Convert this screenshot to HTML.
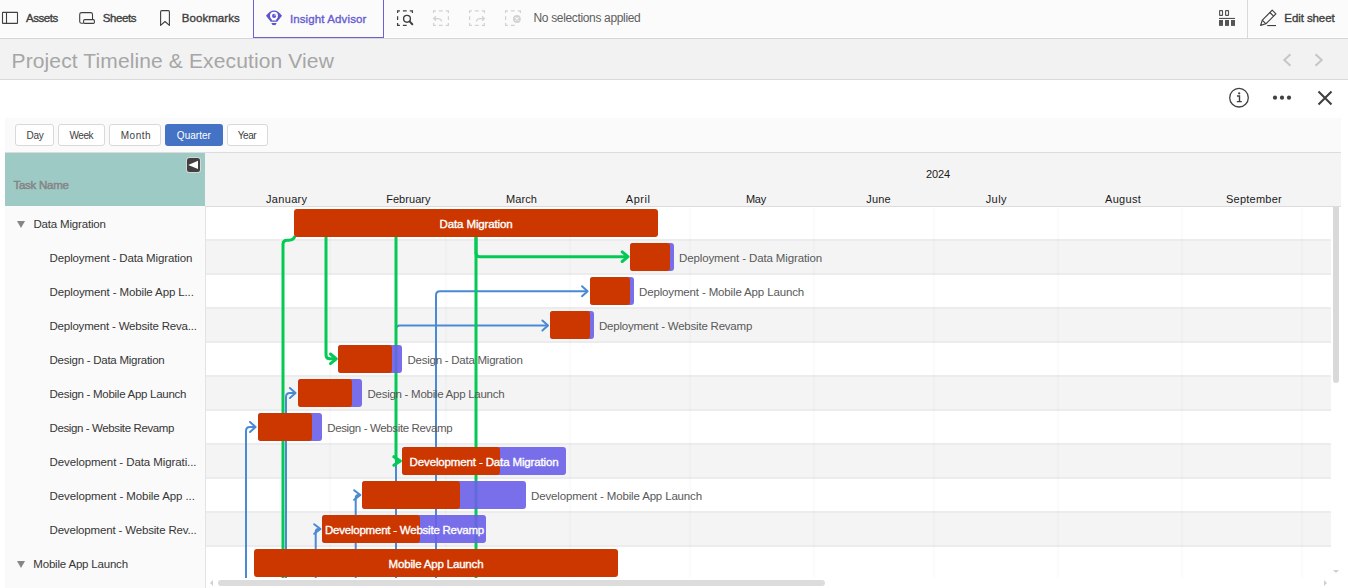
<!DOCTYPE html>
<html><head><meta charset="utf-8"><style>
html,body{margin:0;padding:0;width:1348px;height:588px;overflow:hidden;background:#fff;font-family:"Liberation Sans", sans-serif;}
</style></head><body>
<div style="position:absolute;left:0px;top:0px;width:1348px;height:38px;background:#fbfbfb;"></div><div style="position:absolute;left:0px;top:37px;width:1348px;height:1px;background:#ffffff;"></div><div style="position:absolute;left:0px;top:38px;width:1348px;height:1px;background:#d5d5d5;"></div>
<svg style="position:absolute;left:0;top:0" width="1348" height="38" viewBox="0 0 1348 38">
 <g fill="none" stroke="#404040" stroke-width="1.1">
  <rect x="2.5" y="12.4" width="15" height="11" rx="0.4"/>
  <line x1="6.5" y1="12.4" x2="6.5" y2="23.4"/>
  <path d="M83.6,23.3 H81.6 Q79.7,23.3 79.7,21.4 V14.5 Q79.7,12.6 81.6,12.6 H90.6 Q92.5,12.6 92.5,14.5 V19.6"/>
  <rect x="83.6" y="19.6" width="10.8" height="3.8" rx="1.1"/>
  <path d="M160.6,25.4 V11.8 Q160.6,10.6 161.8,10.6 H168.2 Q169.4,10.6 169.4,11.8 V25.4 L165,21.5 Z" stroke-linejoin="round"/>
 </g>
 <g fill="#5d52cf">
  <path d="M266,15.8 Q270,10.4 274,10.4 Q278,10.4 282,15.8 Q279.5,19 277.2,21.8 H270.8 Q268.5,19 266,15.8 Z"/>
  <path d="M271.8,20.6 V19.5 Q270,18.2 270,15.8 A4,4 0 1 1 278,15.8 Q278,18.2 276.2,19.5 V20.6 Z" fill="#fbfbfb"/>
  <circle cx="274.1" cy="15.9" r="2.05"/>
  <circle cx="275" cy="15" r="0.7" fill="#fbfbfb"/>
  <path d="M271.4,22.9 H276.6 Q276.3,25.3 274,25.3 Q271.7,25.3 271.4,22.9 Z"/>
 </g>
</svg><div style="position:absolute;left:253px;top:-2px;width:131px;height:40px;background:transparent;border:1.5px solid #6b61d6;box-sizing:border-box;"></div><div style="position:absolute;left:26.00px;top:11.42px;font-size:11.5px;line-height:14px;font-weight:400;color:#404040;letter-spacing:-0.432px;white-space:nowrap;-webkit-text-stroke:0.35px #404040;">Assets</div><div style="position:absolute;left:102.70px;top:11.42px;font-size:11.5px;line-height:14px;font-weight:400;color:#404040;letter-spacing:-0.391px;white-space:nowrap;-webkit-text-stroke:0.35px #404040;">Sheets</div><div style="position:absolute;left:181.70px;top:11.42px;font-size:11.5px;line-height:14px;font-weight:400;color:#404040;letter-spacing:0.079px;white-space:nowrap;-webkit-text-stroke:0.35px #404040;">Bookmarks</div><div style="position:absolute;left:289.90px;top:11.72px;font-size:11.5px;line-height:14px;font-weight:400;color:#675cd3;letter-spacing:0.122px;white-space:nowrap;-webkit-text-stroke:0.35px #675cd3;">Insight Advisor</div><svg style="position:absolute;left:390px;top:0" width="140" height="38" viewBox="390 0 140 38"><path d="M397.6,13.1 V10.799999999999999 H399.9 M402.9,10.799999999999999 H406.7 M409.8,10.799999999999999 H412.4 V13.1 M406.7,25.4 H402.9 M399.9,25.4 H397.6 V23.1 M397.6,19.9 V16.2" fill="none" stroke="#404040" stroke-width="1.25"/><circle cx="407" cy="18.8" r="3.4" fill="none" stroke="#404040" stroke-width="1.4"/><path d="M409.6,21.4 L412.3,24.2" stroke="#404040" stroke-width="2" stroke-linecap="round"/><path d="M433.6,13.1 V10.799999999999999 H435.9 M438.9,10.799999999999999 H442.7 M445.8,10.799999999999999 H448.4 V13.1 M448.4,16.2 V19.9 M448.4,23.1 V25.4 H445.8 M442.7,25.4 H438.9 M435.9,25.4 H433.6 V23.1" fill="none" stroke="#d2d2d2" stroke-width="1.25"/><path d="M441.6,21.6 Q441.6,18.5 437.5,18.5 H433.8 M436,16.2 L433.6,18.5 L436,20.8" fill="none" stroke="#d2d2d2" stroke-width="1.25"/><path d="M469.6,13.1 V10.799999999999999 H471.9 M474.9,10.799999999999999 H478.7 M481.8,10.799999999999999 H484.4 V13.1 M484.4,23.1 V25.4 H481.8 M478.7,25.4 H474.9 M471.9,25.4 H469.6 V23.1 M469.6,19.9 V16.2" fill="none" stroke="#d2d2d2" stroke-width="1.25"/><path d="M476.4,21.6 Q476.4,18.5 480.5,18.5 H484.2 M482,16.2 L484.4,18.5 L482,20.8" fill="none" stroke="#d2d2d2" stroke-width="1.25"/><path d="M505.6,13.1 V10.799999999999999 H507.9 M510.9,10.799999999999999 H514.7 M517.8,10.799999999999999 H520.4 V13.1 M514.7,25.4 H510.9 M507.9,25.4 H505.6 V23.1 M505.6,19.9 V16.2" fill="none" stroke="#d2d2d2" stroke-width="1.25"/><circle cx="516.9" cy="19" r="3.9" fill="#d2d2d2"/><path d="M515.3,17.4 L518.5,20.6 M518.5,17.4 L515.3,20.6" stroke="#fbfbfb" stroke-width="1.1"/></svg><div style="position:absolute;left:533.50px;top:10.64px;font-size:12px;line-height:14px;font-weight:400;color:#5e5e5e;letter-spacing:-0.340px;white-space:nowrap;">No selections applied</div>
<svg style="position:absolute;left:1200px;top:0" width="148" height="38" viewBox="1200 0 148 38">
 <g fill="none" stroke="#505050" stroke-width="1.1">
  <rect x="1219.6" y="10.6" width="2.9" height="4.8" rx="0.4"/>
  <rect x="1225.6" y="10.6" width="2.9" height="4.8" rx="0.4"/>
 </g>
 <rect x="1219" y="17.9" width="16" height="1.1" fill="#505050"/>
 <rect x="1219" y="20" width="4" height="5.9" fill="#555"/>
 <rect x="1225" y="20" width="4" height="5.9" fill="#555"/>
 <rect x="1231" y="20" width="4" height="5.9" fill="#555"/>
 <g fill="none" stroke="#404040" stroke-width="1.15" stroke-linejoin="round">
  <path d="M1260.6,25.4 L1262.3,20.2 L1272.2,10.2 L1275.9,13.9 L1265.9,23.8 Z"/>
  <line x1="1262.3" y1="20.2" x2="1265.9" y2="23.8"/>
  <line x1="1269.9" y1="12.5" x2="1273.6" y2="16.2"/>
 </g>
 <rect x="1267.2" y="25" width="8.8" height="1.1" fill="#404040"/>
</svg><div style="position:absolute;left:1247px;top:0px;width:1px;height:38px;background:#d9d9d9;"></div><div style="position:absolute;left:1284.30px;top:11.22px;font-size:11.5px;line-height:14px;font-weight:400;color:#404040;letter-spacing:-0.083px;white-space:nowrap;-webkit-text-stroke:0.35px #404040;">Edit sheet</div><div style="position:absolute;left:0px;top:39px;width:1348px;height:40px;background:#f2f2f2;"></div><div style="position:absolute;left:0px;top:79px;width:1348px;height:1px;background:#d9d9d9;"></div><div style="position:absolute;left:11.50px;top:48.22px;font-size:21px;line-height:25px;font-weight:400;color:#a6a6a6;letter-spacing:0.126px;white-space:nowrap;">Project Timeline &amp; Execution View</div><svg style="position:absolute;left:1270px;top:45px" width="70" height="30" viewBox="1270 45 70 30">
 <g fill="none" stroke="#c6c6c6" stroke-width="2">
  <path d="M1290.5,54.3 L1284.3,60 L1290.5,65.7"/>
  <path d="M1315.5,54.3 L1321.7,60 L1315.5,65.7"/>
 </g></svg><div style="position:absolute;left:0px;top:80px;width:1348px;height:508px;background:#ffffff;"></div><svg style="position:absolute;left:1220px;top:84px" width="128" height="28" viewBox="1220 84 128 28">
 <circle cx="1239" cy="97.7" r="9.3" fill="none" stroke="#404040" stroke-width="1.3"/>
 <circle cx="1239.2" cy="93.3" r="1.15" fill="#404040"/>
 <path d="M1237,96 H1239.5 V101.6 M1236.8,101.6 H1241.8" fill="none" stroke="#404040" stroke-width="1.4"/>
 <g fill="#404040">
  <circle cx="1275" cy="97.7" r="2.1"/>
  <circle cx="1282" cy="97.7" r="2.1"/>
  <circle cx="1289" cy="97.7" r="2.1"/>
 </g>
 <path d="M1318.5,91.5 L1331.5,104.5 M1331.5,91.5 L1318.5,104.5" stroke="#404040" stroke-width="2.1"/>
</svg><div style="position:absolute;left:5px;top:118px;width:1336px;height:470px;background:#fafafa;"></div><div style="position:absolute;left:15px;top:124px;width:39px;height:22px;background:#ffffff;border:1px solid #d9d9d9;border-radius:3px;box-sizing:border-box;"></div><div style="position:absolute;left:58px;top:124px;width:47px;height:22px;background:#ffffff;border:1px solid #d9d9d9;border-radius:3px;box-sizing:border-box;"></div><div style="position:absolute;left:109px;top:124px;width:52px;height:22px;background:#ffffff;border:1px solid #d9d9d9;border-radius:3px;box-sizing:border-box;"></div><div style="position:absolute;left:165px;top:124px;width:58px;height:22px;background:#4472c4;border-radius:3px;"></div><div style="position:absolute;left:227px;top:124px;width:41px;height:22px;background:#ffffff;border:1px solid #d9d9d9;border-radius:3px;box-sizing:border-box;"></div><div style="position:absolute;left:26.60px;top:129.53px;font-size:10px;line-height:12px;font-weight:400;color:#404040;letter-spacing:-0.342px;white-space:nowrap;">Day</div><div style="position:absolute;left:69.60px;top:129.53px;font-size:10px;line-height:12px;font-weight:400;color:#404040;letter-spacing:-0.494px;white-space:nowrap;">Week</div><div style="position:absolute;left:120.70px;top:129.53px;font-size:10px;line-height:12px;font-weight:400;color:#404040;letter-spacing:0.542px;white-space:nowrap;">Month</div><div style="position:absolute;left:176.85px;top:129.53px;font-size:10px;line-height:12px;font-weight:400;color:#ffffff;letter-spacing:0.021px;white-space:nowrap;">Quarter</div><div style="position:absolute;left:237.80px;top:129.53px;font-size:10px;line-height:12px;font-weight:400;color:#404040;letter-spacing:-0.492px;white-space:nowrap;">Year</div><div style="position:absolute;left:5px;top:153px;width:200px;height:53px;background:#9ecac6;"></div><div style="position:absolute;left:186px;top:157px;width:15px;height:15.6px;background:#d6d6d6;border-radius:3.5px;"></div><div style="position:absolute;left:187px;top:158px;width:13px;height:13.6px;background:#404040;border-radius:2.5px;"></div><svg style="position:absolute;left:187px;top:158px" width="14" height="14"><path d="M1.2,6.9 L11,2.8 L11,11 Z" fill="#fff"/></svg><div style="position:absolute;left:13.40px;top:178.02px;font-size:11.5px;line-height:14px;font-weight:400;color:#868686;letter-spacing:-0.253px;white-space:nowrap;-webkit-text-stroke:0.5px #868686;">Task Name</div><div style="position:absolute;left:5px;top:152px;width:1336px;height:1px;background:#dcdcdc;"></div><div style="position:absolute;left:205px;top:153px;width:1136px;height:53px;background:#f4f4f4;"></div><div style="position:absolute;left:205px;top:206px;width:1136px;height:1px;background:#dcdcdc;"></div><div style="position:absolute;left:926.00px;top:167.69px;font-size:11px;line-height:13px;font-weight:400;color:#1a1a1a;letter-spacing:-0.118px;white-space:nowrap;">2024</div><div style="position:absolute;left:266.00px;top:192.69px;font-size:11px;line-height:13px;font-weight:400;color:#1a1a1a;letter-spacing:0.328px;white-space:nowrap;">January</div><div style="position:absolute;left:386.20px;top:192.69px;font-size:11px;line-height:13px;font-weight:400;color:#1a1a1a;letter-spacing:0.041px;white-space:nowrap;">February</div><div style="position:absolute;left:506.00px;top:192.69px;font-size:11px;line-height:13px;font-weight:400;color:#1a1a1a;letter-spacing:0.089px;white-space:nowrap;">March</div><div style="position:absolute;left:625.80px;top:192.69px;font-size:11px;line-height:13px;font-weight:400;color:#1a1a1a;letter-spacing:0.560px;white-space:nowrap;">April</div><div style="position:absolute;left:745.90px;top:192.69px;font-size:11px;line-height:13px;font-weight:400;color:#1a1a1a;letter-spacing:-0.240px;white-space:nowrap;">May</div><div style="position:absolute;left:866.30px;top:192.69px;font-size:11px;line-height:13px;font-weight:400;color:#1a1a1a;letter-spacing:0.188px;white-space:nowrap;">June</div><div style="position:absolute;left:985.70px;top:192.69px;font-size:11px;line-height:13px;font-weight:400;color:#1a1a1a;letter-spacing:0.413px;white-space:nowrap;">July</div><div style="position:absolute;left:1105.00px;top:192.69px;font-size:11px;line-height:13px;font-weight:400;color:#1a1a1a;letter-spacing:0.322px;white-space:nowrap;">August</div><div style="position:absolute;left:1226.00px;top:192.69px;font-size:11px;line-height:13px;font-weight:400;color:#1a1a1a;letter-spacing:0.232px;white-space:nowrap;">September</div><div style="position:absolute;left:5px;top:206px;width:200px;height:382px;background:#fafafa;"></div><div style="position:absolute;left:205px;top:206px;width:1px;height:382px;background:#e3e3e3;"></div><div style="position:absolute;left:33.50px;top:217.02px;font-size:11.5px;line-height:14px;font-weight:400;color:#363636;letter-spacing:-0.184px;white-space:nowrap;">Data Migration</div><svg style="position:absolute;left:16px;top:220px" width="10" height="10"><path d="M1,1 H9 L5,8 Z" fill="#858585"/></svg><div style="position:absolute;left:49.50px;top:251.02px;font-size:11.5px;line-height:14px;font-weight:400;color:#363636;letter-spacing:-0.137px;white-space:nowrap;">Deployment - Data Migration</div><div style="position:absolute;left:49.50px;top:285.02px;font-size:11.5px;line-height:14px;font-weight:400;color:#363636;letter-spacing:-0.122px;white-space:nowrap;">Deployment - Mobile App L...</div><div style="position:absolute;left:49.50px;top:319.02px;font-size:11.5px;line-height:14px;font-weight:400;color:#363636;letter-spacing:-0.187px;white-space:nowrap;">Deployment - Website Reva...</div><div style="position:absolute;left:49.50px;top:353.02px;font-size:11.5px;line-height:14px;font-weight:400;color:#363636;letter-spacing:-0.255px;white-space:nowrap;">Design - Data Migration</div><div style="position:absolute;left:49.50px;top:387.02px;font-size:11.5px;line-height:14px;font-weight:400;color:#363636;letter-spacing:-0.275px;white-space:nowrap;">Design - Mobile App Launch</div><div style="position:absolute;left:49.50px;top:421.02px;font-size:11.5px;line-height:14px;font-weight:400;color:#363636;letter-spacing:-0.385px;white-space:nowrap;">Design - Website Revamp</div><div style="position:absolute;left:49.50px;top:455.02px;font-size:11.5px;line-height:14px;font-weight:400;color:#363636;letter-spacing:-0.091px;white-space:nowrap;">Development - Data Migrati...</div><div style="position:absolute;left:49.50px;top:489.02px;font-size:11.5px;line-height:14px;font-weight:400;color:#363636;letter-spacing:-0.085px;white-space:nowrap;">Development - Mobile App ...</div><div style="position:absolute;left:49.50px;top:523.02px;font-size:11.5px;line-height:14px;font-weight:400;color:#363636;letter-spacing:-0.163px;white-space:nowrap;">Development - Website Rev...</div><div style="position:absolute;left:33.30px;top:557.02px;font-size:11.5px;line-height:14px;font-weight:400;color:#363636;letter-spacing:-0.191px;white-space:nowrap;">Mobile App Launch</div><svg style="position:absolute;left:16px;top:560px" width="10" height="10"><path d="M1,1 H9 L5,8 Z" fill="#858585"/></svg><div style="position:absolute;left:206px;top:207px;width:1135px;height:381px;background:#ffffff;"></div><div style="position:absolute;left:206px;top:206px;width:1125px;height:34px;background:#ffffff;"></div><div style="position:absolute;left:206px;top:240px;width:1125px;height:34px;background:#f4f4f4;"></div><div style="position:absolute;left:206px;top:274px;width:1125px;height:34px;background:#ffffff;"></div><div style="position:absolute;left:206px;top:308px;width:1125px;height:34px;background:#f4f4f4;"></div><div style="position:absolute;left:206px;top:342px;width:1125px;height:34px;background:#ffffff;"></div><div style="position:absolute;left:206px;top:376px;width:1125px;height:34px;background:#f4f4f4;"></div><div style="position:absolute;left:206px;top:410px;width:1125px;height:34px;background:#ffffff;"></div><div style="position:absolute;left:206px;top:444px;width:1125px;height:34px;background:#f4f4f4;"></div><div style="position:absolute;left:206px;top:478px;width:1125px;height:34px;background:#ffffff;"></div><div style="position:absolute;left:206px;top:512px;width:1125px;height:34px;background:#f4f4f4;"></div><div style="position:absolute;left:206px;top:546px;width:1125px;height:32px;background:#ffffff;"></div><div style="position:absolute;left:206px;top:239px;width:1125px;height:2px;background:#ececee;"></div><div style="position:absolute;left:206px;top:273px;width:1125px;height:2px;background:#ececee;"></div><div style="position:absolute;left:206px;top:307px;width:1125px;height:2px;background:#ececee;"></div><div style="position:absolute;left:206px;top:341px;width:1125px;height:2px;background:#ececee;"></div><div style="position:absolute;left:206px;top:375px;width:1125px;height:2px;background:#ececee;"></div><div style="position:absolute;left:206px;top:409px;width:1125px;height:2px;background:#ececee;"></div><div style="position:absolute;left:206px;top:443px;width:1125px;height:2px;background:#ececee;"></div><div style="position:absolute;left:206px;top:477px;width:1125px;height:2px;background:#ececee;"></div><div style="position:absolute;left:206px;top:511px;width:1125px;height:2px;background:#ececee;"></div><div style="position:absolute;left:206px;top:545px;width:1125px;height:2px;background:#ececee;"></div><div style="position:absolute;left:329px;top:207px;width:2px;height:371px;background:rgba(0,0,0,0.016);"></div><div style="position:absolute;left:445px;top:207px;width:2px;height:371px;background:rgba(0,0,0,0.016);"></div><div style="position:absolute;left:569px;top:207px;width:2px;height:371px;background:rgba(0,0,0,0.016);"></div><div style="position:absolute;left:689px;top:207px;width:2px;height:371px;background:rgba(0,0,0,0.016);"></div><div style="position:absolute;left:813px;top:207px;width:2px;height:371px;background:rgba(0,0,0,0.016);"></div><div style="position:absolute;left:933px;top:207px;width:2px;height:371px;background:rgba(0,0,0,0.016);"></div><div style="position:absolute;left:1057px;top:207px;width:2px;height:371px;background:rgba(0,0,0,0.016);"></div><div style="position:absolute;left:1181px;top:207px;width:2px;height:371px;background:rgba(0,0,0,0.016);"></div><div style="position:absolute;left:1301px;top:207px;width:2px;height:371px;background:rgba(0,0,0,0.016);"></div><div style="position:absolute;left:205px;top:206px;width:1136px;height:1px;background:#dcdcdc;"></div><svg style="position:absolute;left:206px;top:207px" width="1125" height="371" viewBox="206 207 1125 371"><path d="M246,580 V431 Q246,427 250,427 H255" fill="none" stroke="#4a89d4" stroke-width="2" stroke-linejoin="round"/><path d="M250.0,422 L255.6,427 L250.0,432" fill="none" stroke="#4a89d4" stroke-width="2" stroke-linecap="round" stroke-linejoin="round"/><path d="M286,580 V397 Q286,393 290,393 H295" fill="none" stroke="#4a89d4" stroke-width="2" stroke-linejoin="round"/><path d="M289.9,388 L295.5,393 L289.9,398" fill="none" stroke="#4a89d4" stroke-width="2" stroke-linecap="round" stroke-linejoin="round"/><path d="M315.7,580 V532 Q315.7,529 318.7,529 H320" fill="none" stroke="#4a89d4" stroke-width="2" stroke-linejoin="round"/><path d="M314.2,524.2 L320.5,529 L314.2,533.8" fill="none" stroke="#4a89d4" stroke-width="2" stroke-linecap="round" stroke-linejoin="round"/><path d="M355.7,580 V498 Q355.7,495 358.7,495 H360" fill="none" stroke="#4a89d4" stroke-width="2" stroke-linejoin="round"/><path d="M354.09999999999997,490.2 L360.4,495 L354.09999999999997,499.8" fill="none" stroke="#4a89d4" stroke-width="2" stroke-linecap="round" stroke-linejoin="round"/><path d="M396,580 V329.5 Q396,325.5 400,325.5 H547.5" fill="none" stroke="#4a89d4" stroke-width="2" stroke-linejoin="round"/><path d="M542.4,320.5 L548,325.5 L542.4,330.5" fill="none" stroke="#4a89d4" stroke-width="2" stroke-linecap="round" stroke-linejoin="round"/><path d="M436,580 V295.2 Q436,291.2 440,291.2 H587" fill="none" stroke="#4a89d4" stroke-width="2" stroke-linejoin="round"/><path d="M582.0,286.2 L587.6,291.2 L582.0,296.2" fill="none" stroke="#4a89d4" stroke-width="2" stroke-linecap="round" stroke-linejoin="round"/><path d="M295,236 Q293.5,240.2 289,240.2 H287 Q283,240.2 283,244.2 V580" fill="none" stroke="#03c955" stroke-width="3" stroke-linejoin="round"/><path d="M326,236 V354.8 Q326,358.8 330,358.8 H335.5" fill="none" stroke="#03c955" stroke-width="3" stroke-linejoin="round"/><path d="M330.5,354.0 L336.3,358.8 L330.5,363.6" fill="none" stroke="#03c955" stroke-width="3" stroke-linecap="round" stroke-linejoin="round"/><path d="M396,236 V458 Q396,461 399,461 H400" fill="none" stroke="#03c955" stroke-width="3" stroke-linejoin="round"/><path d="M393.79999999999995,456.7 L400.4,461 L393.79999999999995,465.3" fill="none" stroke="#03c955" stroke-width="3" stroke-linecap="round" stroke-linejoin="round"/><path d="M476,236 V252.7 Q476,256.7 480,256.7 H627" fill="none" stroke="#03c955" stroke-width="3" stroke-linejoin="round"/><path d="M622.2,251.89999999999998 L628,256.7 L622.2,261.5" fill="none" stroke="#03c955" stroke-width="3" stroke-linecap="round" stroke-linejoin="round"/><path d="M476,236 V580" fill="none" stroke="#03c955" stroke-width="3" stroke-linejoin="round"/></svg><div style="position:absolute;left:294px;top:209px;width:364px;height:28px;background:#cc3700;border-radius:3px;"></div><div style="position:absolute;left:630px;top:243px;width:44px;height:28px;background:rgba(107,95,232,0.9);border-radius:3px;"></div><div style="position:absolute;left:630px;top:243px;width:39.5px;height:28px;background:#cc3700;border-radius:3px;"></div><div style="position:absolute;left:590px;top:277px;width:44px;height:28px;background:rgba(107,95,232,0.9);border-radius:3px;"></div><div style="position:absolute;left:590px;top:277px;width:40px;height:28px;background:#cc3700;border-radius:3px;"></div><div style="position:absolute;left:550px;top:311px;width:44px;height:28px;background:rgba(107,95,232,0.9);border-radius:3px;"></div><div style="position:absolute;left:550px;top:311px;width:39.5px;height:28px;background:#cc3700;border-radius:3px;"></div><div style="position:absolute;left:338px;top:345px;width:64px;height:28px;background:rgba(107,95,232,0.9);border-radius:3px;"></div><div style="position:absolute;left:338px;top:345px;width:54.30000000000001px;height:28px;background:#cc3700;border-radius:3px;"></div><div style="position:absolute;left:298px;top:379px;width:64px;height:28px;background:rgba(107,95,232,0.9);border-radius:3px;"></div><div style="position:absolute;left:298px;top:379px;width:54px;height:28px;background:#cc3700;border-radius:3px;"></div><div style="position:absolute;left:258px;top:413px;width:64px;height:28px;background:rgba(107,95,232,0.9);border-radius:3px;"></div><div style="position:absolute;left:258px;top:413px;width:54.19999999999999px;height:28px;background:#cc3700;border-radius:3px;"></div><div style="position:absolute;left:402px;top:447px;width:164px;height:28px;background:rgba(107,95,232,0.9);border-radius:3px;"></div><div style="position:absolute;left:402px;top:447px;width:98px;height:28px;background:#cc3700;border-radius:3px;"></div><div style="position:absolute;left:362px;top:481px;width:164px;height:28px;background:rgba(107,95,232,0.9);border-radius:3px;"></div><div style="position:absolute;left:362px;top:481px;width:98.30000000000001px;height:28px;background:#cc3700;border-radius:3px;"></div><div style="position:absolute;left:322px;top:515px;width:164px;height:28px;background:rgba(107,95,232,0.9);border-radius:3px;"></div><div style="position:absolute;left:322px;top:515px;width:98.30000000000001px;height:28px;background:#cc3700;border-radius:3px;"></div><div style="position:absolute;left:254px;top:549px;width:364px;height:28px;background:#cc3700;border-radius:3px;"></div><div style="position:absolute;left:679.00px;top:251.02px;font-size:11.5px;line-height:14px;font-weight:400;color:#595959;letter-spacing:-0.122px;white-space:nowrap;">Deployment - Data Migration</div><div style="position:absolute;left:639.00px;top:285.02px;font-size:11.5px;line-height:14px;font-weight:400;color:#595959;letter-spacing:-0.146px;white-space:nowrap;">Deployment - Mobile App Launch</div><div style="position:absolute;left:599.00px;top:319.02px;font-size:11.5px;line-height:14px;font-weight:400;color:#595959;letter-spacing:-0.217px;white-space:nowrap;">Deployment - Website Revamp</div><div style="position:absolute;left:407.50px;top:353.02px;font-size:11.5px;line-height:14px;font-weight:400;color:#595959;letter-spacing:-0.250px;white-space:nowrap;">Design - Data Migration</div><div style="position:absolute;left:367.50px;top:387.02px;font-size:11.5px;line-height:14px;font-weight:400;color:#595959;letter-spacing:-0.271px;white-space:nowrap;">Design - Mobile App Launch</div><div style="position:absolute;left:327.20px;top:421.02px;font-size:11.5px;line-height:14px;font-weight:400;color:#595959;letter-spacing:-0.362px;white-space:nowrap;">Design - Website Revamp</div><div style="position:absolute;left:531.10px;top:489.02px;font-size:11.5px;line-height:14px;font-weight:400;color:#595959;letter-spacing:-0.161px;white-space:nowrap;">Development - Mobile App Launch</div><div style="position:absolute;left:439.60px;top:217.32px;font-size:11.5px;line-height:14px;font-weight:400;color:#ffffff;letter-spacing:-0.130px;white-space:nowrap;-webkit-text-stroke:0.35px #ffffff;">Data Migration</div><div style="position:absolute;left:409.60px;top:455.32px;font-size:11.5px;line-height:14px;font-weight:400;color:#ffffff;letter-spacing:-0.136px;white-space:nowrap;-webkit-text-stroke:0.35px #ffffff;">Development - Data Migration</div><div style="position:absolute;left:325.00px;top:523.32px;font-size:11.5px;line-height:14px;font-weight:400;color:#ffffff;letter-spacing:-0.227px;white-space:nowrap;-webkit-text-stroke:0.35px #ffffff;">Development - Website Revamp</div><div style="position:absolute;left:388.60px;top:557.32px;font-size:11.5px;line-height:14px;font-weight:400;color:#ffffff;letter-spacing:-0.179px;white-space:nowrap;-webkit-text-stroke:0.35px #ffffff;">Mobile App Launch</div><div style="position:absolute;left:1333px;top:207px;width:6px;height:176px;background:#d9d9d9;border-radius:0 0 3px 3px;"></div><div style="position:absolute;left:218px;top:580px;width:607px;height:6px;background:#dcdcdc;border-radius:3px;"></div><svg style="position:absolute;left:206px;top:576px" width="20" height="12"><path d="M7,4 L4,7 L7,10 Z" fill="#d0d0d0"/></svg><svg style="position:absolute;left:1318px;top:566px" width="25" height="22"><path d="M6,14 L9,17 L6,20 Z" fill="#d0d0d0"/><path d="M15,4 L21,4 L18,7 Z" fill="#d0d0d0"/></svg>
</body></html>
